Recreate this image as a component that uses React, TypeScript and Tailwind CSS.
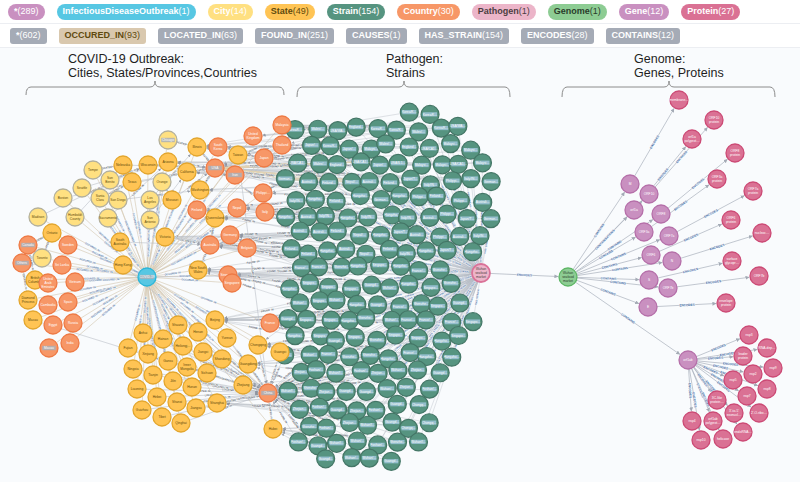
import React from "react";

type Kind = "city" | "state" | "country" | "strain" | "ido" | "pathogen" | "genome" | "gene" | "protein";

type GNode = { x: number; y: number; k: Kind; label: string; hl?: boolean };
type GEdge = { a: GNode; b: GNode; kind: string; label?: string; arrow?: boolean };

const LABELS = [
  { name: "*", count: 289, cls: "bg-[#c990c0] text-white" },
  { name: "InfectiousDiseaseOutbreak", count: 1, cls: "bg-[#57c7e3] text-white" },
  { name: "City", count: 14, cls: "bg-[#ffe081] text-white" },
  { name: "State", count: 49, cls: "bg-[#ffc454] text-[#604a0e]" },
  { name: "Strain", count: 154, cls: "bg-[#569480] text-white" },
  { name: "Country", count: 30, cls: "bg-[#f79767] text-white" },
  { name: "Pathogen", count: 1, cls: "bg-[#ecb5c9] text-[#4b3d41]" },
  { name: "Genome", count: 1, cls: "bg-[#8dcc93] text-[#2a3c2b]" },
  { name: "Gene", count: 12, cls: "bg-[#c990c0] text-white" },
  { name: "Protein", count: 27, cls: "bg-[#da7194] text-white" },
];

const REL_TYPES = [
  { name: "*", count: 602, cls: "bg-[#a5abb6] text-white" },
  { name: "OCCURED_IN", count: 93, cls: "bg-[#d9c8ae] text-[#604a0e]" },
  { name: "LOCATED_IN", count: 63, cls: "bg-[#a5abb6] text-white" },
  { name: "FOUND_IN", count: 251, cls: "bg-[#a5abb6] text-white" },
  { name: "CAUSES", count: 1, cls: "bg-[#a5abb6] text-white" },
  { name: "HAS_STRAIN", count: 154, cls: "bg-[#a5abb6] text-white" },
  { name: "ENCODES", count: 28, cls: "bg-[#a5abb6] text-white" },
  { name: "CONTAINS", count: 12, cls: "bg-[#a5abb6] text-white" },
];

const STYLE: Record<Kind, { fill: string; stroke: string; text: string }> = {
  city: { fill: "#ffe081", stroke: "#b3b09c", text: "#604a0e" },
  state: { fill: "#ffc454", stroke: "#e3a62e", text: "#604a0e" },
  country: { fill: "#f79767", stroke: "#ee7a45", text: "#ffffff" },
  strain: { fill: "#569480", stroke: "#447666", text: "#ffffff" },
  ido: { fill: "#57c7e3", stroke: "#2cb5d8", text: "#ffffff" },
  pathogen: { fill: "#ecb5c9", stroke: "#da7298", text: "#4b3d41" },
  genome: { fill: "#8dcc93", stroke: "#5db665", text: "#2a3c2b" },
  gene: { fill: "#c990c0", stroke: "#b56fa9", text: "#ffffff" },
  protein: { fill: "#da7194", stroke: "#cc4a75", text: "#ffffff" },
};

function rng(seed: number) {
  let a = seed;
  return () => {
    a |= 0;
    a = (a + 0x6d2b79f5) | 0;
    let t = Math.imul(a ^ (a >>> 15), 1 | a);
    t = (t + Math.imul(t ^ (t >>> 7), 61 | t)) ^ t;
    return ((t ^ (t >>> 14)) >>> 0) / 4294967296;
  };
}

const mk = (k: Kind, list: [number, number, string, boolean?][]): GNode[] =>
  list.map(([x, y, label, hl]) => ({ x, y, k, label, hl }));

// --- outbreak side ---
const covid: GNode = { x: 147, y: 277, k: "ido", label: "COVID-19", hl: true };

const cities = mk("city", [
  [168, 140, "Chicago", true], [93, 170, "Tempe"], [110, 180, "San Benito"], [82, 188, "Seattle"],
  [63, 198, "Boston"], [100, 198, "Santa Clara"], [118, 200, "San Diego"], [162, 182, "Orange"],
  [150, 200, "Los Angeles"], [75, 217, "Humboldt County"], [38, 217, "Madison"], [108, 218, "Sacramento"],
  [150, 220, "San Antonio"], [42, 258, "Toronto"],
]);

const usStates = mk("state", [
  [197, 147, "Illinois"], [123, 165, "Nebraska"], [148, 165, "Wisconsin"], [168, 162, "Arizona"],
  [187, 172, "California"], [132, 182, "Texas"], [200, 190, "Washington"], [172, 200, "Missouri"],
]);
const otherStates = mk("state", [
  [52, 233, "Ontario"], [35, 280, "British Columbia"], [120, 242, "South Australia"], [165, 237, "Victoria"],
  [215, 218, "Queensland"], [198, 270, "New South Wales"], [123, 265, "Hong Kong"], [28, 300, "Diamond Princess"],
  [33, 320, "Macau"], [238, 155, "Taiwan"],
]);
const provinces = mk("state", [
  [215, 320, "Beijing"], [178, 325, "Shaanxi"], [143, 333, "Anhui"], [198, 332, "Henan"], [163, 339, "Hainan"],
  [227, 338, "Yunnan"], [128, 348, "Fujian"], [183, 346, "Heilongjiang"], [258, 345, "Chongqing"], [280, 352, "Guangxi"],
  [148, 354, "Xinjiang"], [203, 352, "Jiangxi"], [168, 361, "Gansu"], [222, 359, "Shandong"], [248, 364, "Guangdong"],
  [187, 367, "Inner Mongolia"], [133, 369, "Ningxia"], [207, 373, "Sichuan"], [153, 375, "Tianjin"], [173, 381, "Jilin"],
  [243, 385, "Zhejiang"], [192, 387, "Hunan"], [137, 389, "Liaoning"], [157, 397, "Hebei"], [177, 402, "Shanxi"],
  [217, 403, "Shanghai"], [196, 408, "Jiangsu"], [142, 410, "Guizhou"], [162, 417, "Tibet"], [181, 423, "Qinghai"],
  [273, 429, "Hubei"],
]);

const countries = mk("country", [
  [282, 125, "Malaysia"], [253, 136, "United Kingdom"], [218, 147, "South Korea"], [282, 145, "Thailand"],
  [264, 158, "Japan"], [215, 168, "USA", true], [235, 175, "Iran", true], [263, 193, "Philippines"],
  [197, 210, "Finland"], [237, 208, "Nepal"], [265, 212, "Italy"], [230, 235, "Germany"],
  [210, 245, "Australia"], [247, 248, "Belgium"], [228, 275, "Singapore"], [232, 283, "Singapore"],
  [28, 245, "Canada", true], [68, 245, "Sweden"], [22, 263, "Others", true], [62, 265, "Sri Lanka"],
  [48, 283, "United Arab Emirates"], [75, 282, "Vietnam"], [48, 305, "Cambodia"], [68, 302, "Spain"],
  [53, 325, "Egypt"], [73, 323, "Russia"], [49, 348, "Macau", true], [70, 343, "India"],
  [270, 323, "France"], [268, 393, "China", true],
]);
const C = (name: string) => countries.find((c) => c.label === name)!;

// --- pathogen / strains ---
const pathogen: GNode = { x: 481, y: 273, k: "pathogen", label: "Wuhan seafood market" };

const POLY: [number, number][] = [
  [287, 165], [298, 128], [320, 120], [345, 124], [390, 114], [425, 104], [452, 114], [470, 122],
  [490, 152], [490, 240], [472, 252], [466, 290], [474, 335], [466, 360], [442, 370], [436, 405],
  [428, 440], [412, 458], [382, 472], [330, 468], [300, 447], [286, 420], [286, 300], [286, 200],
];

function inside(x: number, y: number) {
  let c = false;
  for (let i = 0, j = POLY.length - 1; i < POLY.length; j = i++) {
    const [xi, yi] = POLY[i];
    const [xj, yj] = POLY[j];
    if (yi > y !== yj > y && x < ((xj - xi) * (y - yi)) / (yj - yi) + xi) c = !c;
  }
  return c;
}

const NAMES = [
  ["USA/CA1…", "Japan/…", "England…", "Malaysi…", "Korea/K…", "USA/WA…", "Wales/…", "USA/IL1…"],
  ["Australi…", "Japan/T…", "Italy/IN…", "Hangzho…", "Nepal/…", "German…", "Philippi…", "Finland…"],
  ["Singapo…", "Hangzho…", "Shenzhe…", "France/…", "Guangd…", "Wuhan/…"],
  ["Wuhan/…", "Guangd…", "Zhejian…", "Shenzhe…", "Chongq…", "Wuhan/I…", "Foshan/…"],
];

const strains: GNode[] = [];
{
  const r = rng(11);
  for (let row = 0; row < 22; row++) {
    const y = 112 + row * 17.4;
    for (let x = 288 + (row % 2 ? 10 : 0); x < 495; x += 20.2) {
      if (!inside(x, y)) continue;
      if (Math.hypot(x - pathogen.x, y - pathogen.y) < 22) continue;
      const band = y < 170 ? 0 : y < 260 ? 1 : y < 360 ? 2 : 3;
      const names = NAMES[band];
      strains.push({
        x: x + (r() - 0.5) * 7,
        y: y + (r() - 0.5) * 7,
        k: "strain",
        label: names[Math.floor(r() * names.length)],
      });
    }
  }
}

// --- genome side ---
const genome: GNode = { x: 568, y: 277, k: "genome", label: "Wuhan seafood market" };
const genes = mk("gene", [
  [630, 184, "M"], [649, 194, "ORF10"], [634, 210, "orf1a"], [661, 214, "ORF8"], [644, 232, "ORF3a"],
  [669, 236, "ORF7a"], [651, 255, "ORF6"], [672, 261, "N"], [649, 280, "S"], [668, 288, "ORF7b"],
  [648, 307, "E"], [688, 360, "orf1ab"],
]);
const proteins = mk("protein", [
  [679, 100, "membrane…"], [714, 120, "ORF10 protein"], [692, 139, "orf1a polyprot…"], [735, 153, "ORF8 protein"],
  [717, 179, "ORF3a protein"], [753, 191, "ORF7a protein"], [731, 220, "ORF6 protein"], [762, 233, "nucleoc…"],
  [732, 261, "surface glycopr…"], [759, 276, "ORF7b"], [726, 303, "envelope protein"],
  [749, 335, "nsp3"], [767, 348, "RNA-dep…"], [743, 356, "leader protein"], [773, 368, "nsp9"],
  [753, 374, "nsp2"], [733, 380, "nsp5"], [767, 389, "nsp8"], [747, 396, "nsp7"], [717, 400, "3C-like protein…"],
  [759, 413, "2'-O-ribo…"], [734, 413, "3'-to-5' exonucl…"], [692, 421, "nsp4"], [713, 421, "orf1ab polyprot…"],
  [743, 432, "endoRNA…"], [701, 440, "nsp10"], [723, 439, "helicase"],
]);

// --- edges ---
const edges: GEdge[] = [];
const locations = [...cities, ...usStates, ...otherStates, ...provinces, ...countries];
locations.forEach((n) => edges.push({ a: covid, b: n, kind: "occ", label: "OCCURED_IN" }));

cities.forEach((c, i) => {
  const target = c.label === "Toronto" ? otherStates[0] : usStates[i % usStates.length];
  edges.push({ a: c, b: target, kind: "loc", label: "LOCATED_IN", arrow: true });
});
usStates.forEach((s) => edges.push({ a: s, b: C("USA"), kind: "loc", label: "LOCATED_IN", arrow: true }));
provinces.forEach((s) => edges.push({ a: s, b: C("China"), kind: "loc", label: "LOCATED_IN", arrow: true }));
otherStates.forEach((s) => {
  const to =
    s.label === "Ontario" || s.label === "British Columbia"
      ? C("Canada")
      : s.label.includes("Australia") || s.label === "Victoria" || s.label === "Queensland" || s.label === "New South Wales"
        ? C("Australia")
        : s.label === "Diamond Princess"
          ? C("Others")
          : C("China");
  edges.push({ a: s, b: to, kind: "loc", label: "LOCATED_IN", arrow: true });
});

const HUBS: GNode[] = [
  C("USA"), C("USA"), C("Japan"), C("Malaysia"), C("Thailand"), C("United Kingdom"), C("South Korea"),
  C("Australia"), C("Singapore"), C("Italy"), C("Finland"), C("Germany"), C("Philippines"), C("Nepal"),
  C("France"), C("China"), C("China"), C("China"), otherStates[9],
  usStates[4], usStates[6], usStates[0], usStates[3], otherStates[4], otherStates[3], otherStates[5],
  provinces[14], provinces[20], provinces[8], provinces[9], provinces[30], provinces[0], provinces[25],
];

{
  const r = rng(5);
  strains.forEach((s) => {
    const pick = (skip?: GNode) => {
      let best = HUBS[0];
      let bs = 1e9;
      HUBS.forEach((h) => {
        if (h === skip) return;
        let sc = Math.abs(h.y - s.y) + r() * 70;
        if (h.label === "China" && s.y > 300) sc -= 45;
        if (h.label === "USA" && s.y < 220) sc -= 30;
        if (sc < bs) {
          bs = sc;
          best = h;
        }
      });
      return best;
    };
    const first = pick();
    edges.push({ a: s, b: first, kind: "found", label: "FOUND_IN", arrow: true });
    if (r() < 0.62) edges.push({ a: s, b: pick(first), kind: "found", label: "FOUND_IN", arrow: true });
    edges.push({ a: pathogen, b: s, kind: "has", label: "HAS_STRAIN" });
  });
  strains
    .filter((s) => s.y > 160 && s.y < 195 && s.x < 370)
    .forEach((s) => edges.push({ a: s, b: C("USA"), kind: "tan" }));
}

edges.push({ a: pathogen, b: covid, kind: "causes", label: "CAUSES" });
edges.push({ a: pathogen, b: genome, kind: "gen", label: "ENCODES", arrow: true });
genes.forEach((g) => edges.push({ a: genome, b: g, kind: "gen", label: "CONTAINS", arrow: true }));
genes.slice(0, 11).forEach((g, i) => edges.push({ a: g, b: proteins[i], kind: "gen", label: "ENCODES", arrow: true }));
proteins.slice(11).forEach((p) => edges.push({ a: genes[11], b: p, kind: "gen", label: "ENCODES", arrow: true }));

const EDGE_STYLE: Record<string, { stroke: string; w: number; op: number; lab: string }> = {
  occ: { stroke: "#d6c9b2", w: 0.7, op: 0.9, lab: "#5577a6" },
  loc: { stroke: "#b5bac3", w: 0.6, op: 0.9, lab: "#555c66" },
  found: { stroke: "#b9bec7", w: 0.55, op: 0.8, lab: "#4a515c" },
  has: { stroke: "#b3b9c3", w: 0.5, op: 0.75, lab: "#4f73a6" },
  tan: { stroke: "#e4d3b0", w: 1.4, op: 0.8, lab: "" },
  causes: { stroke: "#b5bac3", w: 0.6, op: 0.9, lab: "#4f73a6" },
  gen: { stroke: "#a9b0bb", w: 0.7, op: 1, lab: "#3f6aa3" },
};

function wrap(label: string): string[] {
  const words = label.split(" ");
  const lines: string[] = [];
  let cur = "";
  words.forEach((w) => {
    if (!cur) cur = w;
    else if ((cur + " " + w).length <= 9) cur += " " + w;
    else {
      lines.push(cur);
      cur = w;
    }
  });
  if (cur) lines.push(cur);
  return lines.slice(0, 3).map((l) => (l.length > 10 ? l.slice(0, 8) + "…" : l));
}

const R = 9;

function Edge({ e }: { e: GEdge }) {
  const st = EDGE_STYLE[e.kind];
  const dx = e.b.x - e.a.x;
  const dy = e.b.y - e.a.y;
  const len = Math.hypot(dx, dy) || 1;
  const ux = dx / len;
  const uy = dy / len;
  const x1 = e.a.x + ux * R;
  const y1 = e.a.y + uy * R;
  const x2 = e.b.x - ux * (R + 0.6);
  const y2 = e.b.y - uy * (R + 0.6);
  return (
    <line
      x1={x1}
      y1={y1}
      x2={x2}
      y2={y2}
      stroke={st.stroke}
      strokeWidth={st.w}
      opacity={st.op}
      markerEnd={e.arrow ? (e.kind === "gen" ? "url(#arrowGen)" : "url(#arrow)") : undefined}
    />
  );
}

function EdgeLabel({ e }: { e: GEdge }) {
  if (!e.label) return null;
  const st = EDGE_STYLE[e.kind];
  const mx = (e.a.x + e.b.x) / 2;
  const my = (e.a.y + e.b.y) / 2;
  let ang = (Math.atan2(e.b.y - e.a.y, e.b.x - e.a.x) * 180) / Math.PI;
  if (ang > 90) ang -= 180;
  if (ang < -90) ang += 180;
  const fs = e.kind === "gen" ? 3.1 : 2.5;
  return (
    <text
      x={mx}
      y={my + fs * 0.35}
      fontSize={fs}
      fontWeight={700}
      fill={st.lab}
      textAnchor="middle"
      transform={`rotate(${ang.toFixed(1)} ${mx.toFixed(1)} ${my.toFixed(1)})`}
      stroke="#f9fbfd"
      strokeWidth={0.7}
      paintOrder="stroke"
    >
      {e.label}
    </text>
  );
}

function Node({ n }: { n: GNode }) {
  const s = STYLE[n.k];
  if (n.k === "strain") {
    return (
      <g>
        <circle cx={n.x} cy={n.y} r={R} fill={s.fill} stroke={s.stroke} strokeWidth={1.2} />
        <rect x={n.x - 7} y={n.y - 2.2} width={14} height={4.2} fill="#9fc6da" opacity={0.85} />
        <text x={n.x} y={n.y + 1.1} fontSize={3.2} fill="#fff" textAnchor="middle">
          {n.label}
        </text>
      </g>
    );
  }
  const lines = wrap(n.label);
  const fs = 3.3;
  const lh = 3.8;
  const top = n.y - ((lines.length - 1) * lh) / 2;
  return (
    <g>
      <circle
        cx={n.x}
        cy={n.y}
        r={R}
        fill={s.fill}
        stroke={s.stroke}
        strokeWidth={n.k === "pathogen" ? 1.8 : 1.3}
      />
      {n.hl && (
        <rect
          x={n.x - 6.8}
          y={n.y - (lines.length * lh) / 2 - 0.3}
          width={13.6}
          height={lines.length * lh + 0.6}
          fill="#aab0ba"
          opacity={0.85}
        />
      )}
      <text fontSize={fs} fill={n.hl ? "#ffffff" : s.text} textAnchor="middle">
        {lines.map((l, i) => (
          <tspan key={i} x={n.x} y={top + i * lh + fs * 0.35}>
            {l}
          </tspan>
        ))}
      </text>
    </g>
  );
}

function Bracket({ x1, x2, xm, low }: { x1: number; x2: number; xm: number; low: number }) {
  const h = 87;
  const d = `M${x1} ${low} Q${x1} ${h} ${x1 + 5} ${h} L${xm - 5} ${h} Q${xm} ${h} ${xm} ${h - 6} Q${xm} ${h} ${xm + 5} ${h} L${x2 - 5} ${h} Q${x2} ${h} ${x2} ${low}`;
  return <path d={d} fill="none" stroke="#8c8c8c" strokeWidth={1} />;
}

const allNodes: GNode[] = [
  ...strains,
  ...cities,
  ...usStates,
  ...otherStates,
  ...provinces,
  ...countries,
  covid,
  pathogen,
  genome,
  ...genes,
  ...proteins,
];

const Pill = ({ name, count, cls, round }: { name: string; count: number; cls: string; round: string }) => (
  <span className={`inline-flex h-4 items-center px-[6px] text-[9px] leading-none ${round} ${cls}`}>
    <span className="font-bold">{name}</span>
    <span>({count})</span>
  </span>
);

export default function App() {
  return (
    <div className="h-[482px] w-[800px] overflow-hidden bg-white font-['Liberation_Sans',Arial,sans-serif]">
      <div className="flex h-6 items-center gap-3 border-b border-[#eceef2] pl-2">
        {LABELS.map((l) => (
          <Pill key={l.name + l.count} {...l} round="rounded-full" />
        ))}
      </div>
      <div className="flex h-6 items-center gap-3 border-b border-[#eceef2] pl-[10px]">
        {REL_TYPES.map((l) => (
          <Pill key={l.name} {...l} round="rounded-[3px]" />
        ))}
      </div>
      <svg width={800} height={434} viewBox="0 48 800 434" className="block bg-[#f9fbfd]">
        <defs>
          <marker id="arrow" viewBox="0 0 6 6" refX="6" refY="3" markerWidth="3" markerHeight="3" markerUnits="userSpaceOnUse" orient="auto">
            <path d="M0 0 L6 3 L0 6 z" fill="#8d94a0" />
          </marker>
          <marker id="arrowGen" viewBox="0 0 6 6" refX="6" refY="3" markerWidth="4" markerHeight="4" markerUnits="userSpaceOnUse" orient="auto">
            <path d="M0 0 L6 3 L0 6 z" fill="#a3aab5" />
          </marker>
        </defs>

        <g fontFamily="'Liberation Sans', Arial, sans-serif" fill="#1f1f1f" fontSize={12.5}>
          <text x={68} y={62.5}>COVID-19 Outbreak:</text>
          <text x={68} y={76.5}>Cities, States/Provinces,Countries</text>
          <text x={386} y={62.5}>Pathogen:</text>
          <text x={386} y={76.5}>Strains</text>
          <text x={634} y={62.5}>Genome:</text>
          <text x={634} y={76.5}>Genes, Proteins</text>
        </g>
        <Bracket x1={26} x2={284} xm={155} low={95} />
        <Bracket x1={297} x2={510} xm={404} low={97} />
        <Bracket x1={562} x2={775} xm={669} low={97} />

        <g>
          {edges.map((e, i) => (
            <Edge key={i} e={e} />
          ))}
        </g>
        <g fontFamily="'Liberation Sans', Arial, sans-serif">
          {edges.map((e, i) => (
            <EdgeLabel key={i} e={e} />
          ))}
        </g>
        <g fontFamily="'Liberation Sans', Arial, sans-serif">
          {allNodes.map((n, i) => (
            <Node key={i} n={n} />
          ))}
        </g>
      </svg>
    </div>
  );
}
